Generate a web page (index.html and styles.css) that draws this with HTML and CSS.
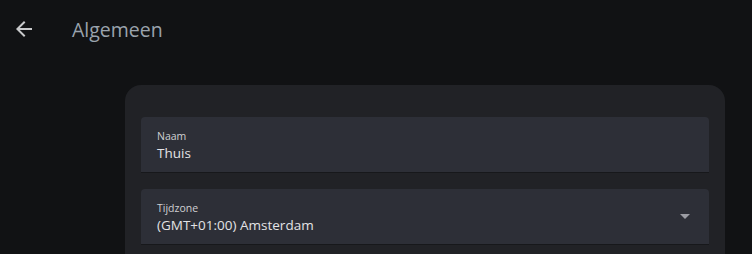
FILE: index.html
```html
<!DOCTYPE html>
<html lang="nl">
<head>
    <meta charset="UTF-8">
    <meta name="viewport" content="width=device-width, initial-scale=1.0">
    <title>Algemeen</title>
    <link rel="stylesheet" href="styles.css">
</head>
<body>
    <header class="toolbar">
        <button class="icon-btn" aria-label="Terug">
            <svg viewBox="0 0 24 24" width="24" height="24"><path d="M20 11H7.83l5.59-5.59L12 4l-8 8 8 8 1.41-1.41L7.83 13H20v-2z"/></svg>
        </button>
        <div class="title">Algemeen</div>
    </header>

    <main class="content">
        <div class="card">
            <div class="field">
                <div class="label">Naam</div>
                <div class="value">Thuis</div>
            </div>

            <div class="field select">
                <div>
                    <div class="label">Tijdzone</div>
                    <div class="value">(GMT+01:00) Amsterdam</div>
                </div>
                <svg class="dropdown" viewBox="0 0 24 24" width="24" height="24"><path d="M7 10l5 5 5-5z"/></svg>
            </div>
        </div>
    </main>
</body>
</html>
```

FILE: styles.css
```css
* {
    margin: 0;
    padding: 0;
    box-sizing: border-box;
}

body {
    background-color: #111214;
    color: #e1e1e1;
    font-family: 'Open Sans', sans-serif;
    height: 254px;
    overflow: hidden;
}

.toolbar {
    display: flex;
    align-items: center;
    height: 58px;
}

.icon-btn {
    width: 48px;
    height: 48px;
    display: flex;
    align-items: center;
    justify-content: center;
    background: none;
    border: none;
    fill: #c9cacc;
}

.title {
    margin-left: 24px;
    font-size: 19.5px;
    color: #9aa3ad;
}

.content {
    padding: 27px 27px 0 125px;
}

.card {
    background-color: #212226;
    border-radius: 16px 16px 0 0;
    padding: 32px 16px 0;
    height: 169px;
}

.field {
    background-color: #2d2f37;
    border-radius: 4px 4px 0 0;
    border-bottom: 1px solid #17181b;
    height: 56px;
    padding: 12px 16px 0;
    margin-bottom: 16px;
}

.field.select {
    display: flex;
    justify-content: space-between;
    align-items: flex-start;
    padding-right: 12px;
}

.label {
    font-size: 10.5px;
    color: #cfcfd2;
    line-height: 15px;
}

.value {
    font-size: 13.5px;
    color: #e3e3e5;
    line-height: 18px;
}

.dropdown {
    margin-top: 3px;
    fill: #9b9ca3;
}
```
